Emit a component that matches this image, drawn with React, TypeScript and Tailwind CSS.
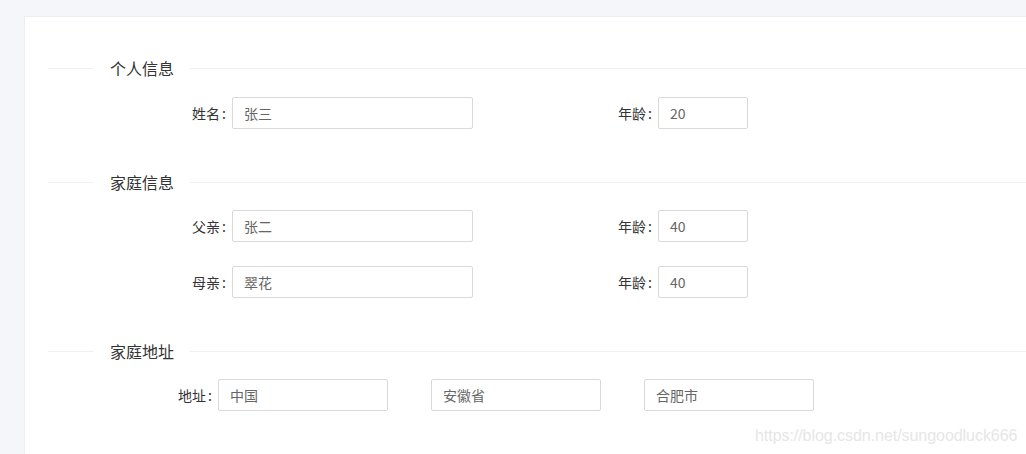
const font = { fontFamily: '"Noto Sans CJK SC", "Microsoft YaHei", sans-serif' }

function Divider({ title }: { title: string }) {
  return (
    <div className="flex h-[22px] items-center">
      <div className="h-px w-[46px] bg-[#f0f0f0]" />
      <span className="px-4 text-[16px] leading-[22px] whitespace-nowrap text-[#333]">{title}</span>
      <div className="h-px flex-1 bg-[#f0f0f0]" />
    </div>
  )
}

function Field({ value, width }: { value: string; width: string }) {
  return (
    <div
      className={`flex h-[32px] items-center rounded-[2px] border border-[#d9d9d9] bg-white px-[11px] text-[14px] text-[#666] ${width}`}
    >
      {value}
    </div>
  )
}

function Label({ text, width }: { text: string; width: string }) {
  return (
    <div className={`pr-[6px] text-right text-[14px] whitespace-nowrap text-[#333] ${width}`}>
      {text}
      <span className="ml-[2px]">:</span>
    </div>
  )
}

function PersonRow({ name, age, label }: { name: string; age: string; label: string }) {
  return (
    <div className="flex items-center">
      <Label text={label} width="w-[184px]" />
      <Field value={name} width="w-[241px]" />
      <Label text="年龄" width="w-[185px]" />
      <Field value={age} width="w-[90px]" />
    </div>
  )
}

export default function App() {
  return (
    <div className="relative h-[454px] w-[1026px] overflow-hidden bg-[#f5f6fa] pt-[16px] pl-[24px]" style={font}>
      <div className="h-[460px] w-[1040px] border border-[#ebeef5] bg-white pt-[40px] pl-[23px]">
        <Divider title="个人信息" />
        <div className="mt-[18px]">
          <PersonRow label="姓名" name="张三" age="20" />
        </div>

        <div className="mt-[42px]">
          <Divider title="家庭信息" />
        </div>
        <div className="mt-[17px] flex flex-col gap-[24px]">
          <PersonRow label="父亲" name="张二" age="40" />
          <PersonRow label="母亲" name="翠花" age="40" />
        </div>

        <div className="mt-[42px]">
          <Divider title="家庭地址" />
        </div>
        <div className="mt-[17px] flex items-center">
          <Label text="地址" width="w-[170px]" />
          <div className="flex gap-[43px]">
            <Field value="中国" width="w-[170px]" />
            <Field value="安徽省" width="w-[170px]" />
            <Field value="合肥市" width="w-[170px]" />
          </div>
        </div>
      </div>

      <div
        className="absolute top-[424px] left-[755px] text-[16px] tracking-[-0.05px] text-[#e6e6e6]"
        style={{ fontFamily: '"Liberation Sans", Arial, sans-serif' }}
      >
        https://blog.csdn.net/sungoodluck666
      </div>
    </div>
  )
}
